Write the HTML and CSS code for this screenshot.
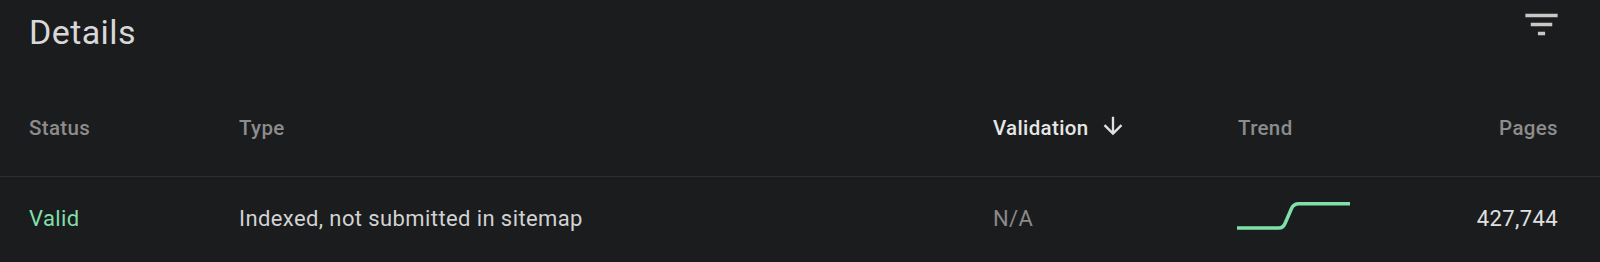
FILE: index.html
```html
<!DOCTYPE html>
<html lang="en">
<head>
<meta charset="utf-8">
<title>Details</title>
<link rel="stylesheet" href="styles.css">
</head>
<body>
<section class="panel">
  <header class="panel-head">
    <h1 class="title">Details</h1>
    <button class="icon-btn" aria-label="Filter">
      <svg viewBox="0 0 24 24" width="43" height="43"><path fill="currentColor" d="M10 18h4v-2h-4v2zM3 6v2h18V6H3zm3 7h12v-2H6v2z"/></svg>
    </button>
  </header>
  <div class="table">
    <div class="row head">
      <div class="cell">Status</div>
      <div class="cell">Type</div>
      <div class="cell sorted">Validation
        <svg class="sort-icon" viewBox="0 0 24 24" width="28" height="28"><path fill="currentColor" d="M20 12l-1.41-1.41L13 16.17V4h-2v12.17l-5.58-5.59L4 12l8 8 8-8z"/></svg>
      </div>
      <div class="cell">Trend</div>
      <div class="cell num">Pages</div>
    </div>
    <div class="row body">
      <div class="cell valid">Valid</div>
      <div class="cell">Indexed, not submitted in sitemap</div>
      <div class="cell muted">N/A</div>
      <div class="cell trend">
        <svg viewBox="0 0 114 34" width="114" height="34"><path d="M0 26 H42 Q46 26 48 21.5 L54.5 6.5 Q56.5 1.8 62 1.8 H113" fill="none" stroke="#7fe0a9" stroke-width="3.5" stroke-linejoin="round"/></svg>
      </div>
      <div class="cell num value">427,744</div>
    </div>
  </div>
</section>
</body>
</html>
```
FILE: styles.css
```css
html, body {
  margin: 0;
  padding: 0;
  background: #1b1c1e;
}
body {
  font-family: Roboto, "Liberation Sans", sans-serif;
  color: #d6d6d6;
  height: 262px;
  overflow: hidden;
}
.panel {
  padding: 0 37px 0 29px;
}
.panel-head {
  display: flex;
  justify-content: space-between;
  align-items: flex-start;
  height: 52px;
}
.title {
  margin: 12px 0 0;
  font-size: 34px;
  line-height: 40px;
  font-weight: 400;
  letter-spacing: 0.4px;
  color: #d8d8d8;
}
.icon-btn {
  margin-top: 3px;
  padding: 0;
  border: 0;
  background: none;
  color: #cac8c4;
  width: 43px;
  height: 43px;
}
.icon-btn svg { display: block; }
.table {
  margin: 0 -37px 0 -29px;
}
.row {
  display: grid;
  grid-template-columns: 210px 1fr 245px 160px 160px;
  padding: 0 42px 0 29px;
}
.row.head {
  height: 125px;
  box-sizing: border-box;
  padding-top: 64px;
  border-bottom: 1px solid #2e302e;
  font-size: 20.5px;
  line-height: 24px;
  font-weight: 500;
  letter-spacing: 0.35px;
  color: #8c8c8c;
}
.row.head .sorted {
  display: flex;
  align-items: center;
  gap: 11px;
  color: #e6e6e6;
  height: 24px;
}
.sort-icon {
  display: block;
  margin-top: -4px;
  color: #e0e0e0;
}
.row.body {
  height: 84px;
  align-items: center;
  font-size: 22px;
  line-height: 26px;
  letter-spacing: 0.4px;
  color: #d2d2d2;
}
.cell.num { text-align: right; }
.valid { color: #81dfa9; }
.muted { color: #8a8a8a; }
.trend svg {
  display: block;
  margin-left: -1px;
}
.value { color: #e0e0e0; }
```
